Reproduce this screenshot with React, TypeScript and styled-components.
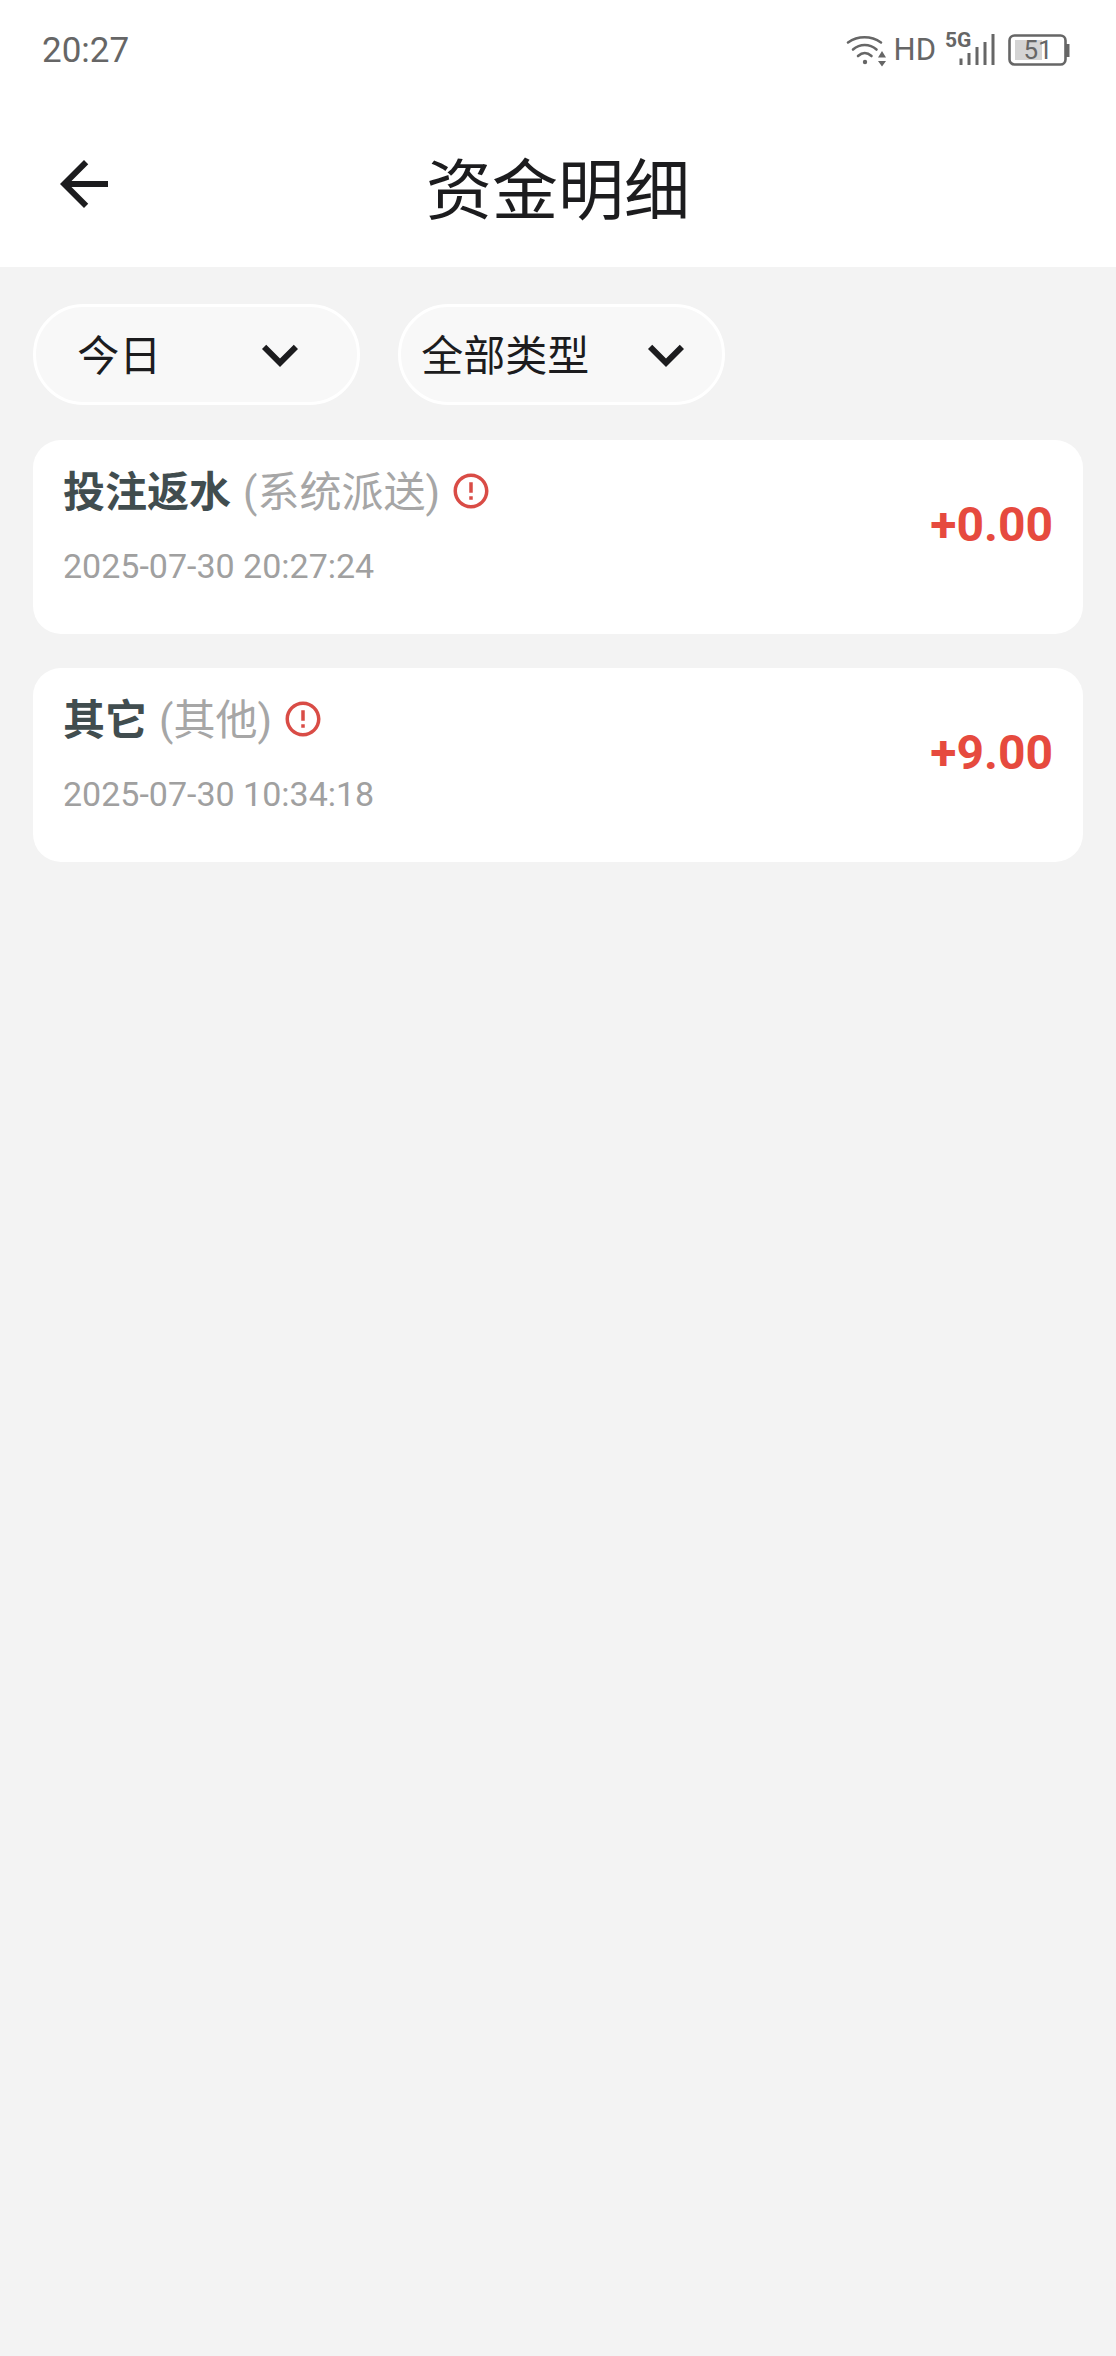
import React from 'react';
import styled, { createGlobalStyle } from 'styled-components';

const GlobalStyle = createGlobalStyle`
  *, *::before, *::after { box-sizing: border-box; }
  html, body { margin: 0; background: #f3f3f3; }
  body { font-family: Roboto, "Noto Sans CJK SC", sans-serif; color: #1c1c1e; }
  h1, h2, p, ul { margin: 0; padding: 0; font-weight: 400; }
`;

const Screen = styled.div`
  min-height: 100vh;
  background: #f3f3f3;
`;

const Top = styled.header`
  background: #ffffff;
`;

const StatusBar = styled.div`
  display: flex;
  align-items: center;
  justify-content: space-between;
  height: 100px;
  padding: 0 46px 0 42px;
  color: #666666;
`;

const Clock = styled.time`
  font-size: 35px;
  line-height: 48px;
  padding-top: 2px;
`;

const Indicators = styled.div`
  display: flex;
  align-items: center;
  height: 36px;
`;

const Hd = styled.span`
  margin: 0 8px 0 5px;
  font-size: 31px;
  line-height: 36px;
`;

const Cellular = styled.div`
  position: relative;
  width: 52px;
  height: 36px;
  margin-right: 12px;
`;

const Generation = styled.span`
  position: absolute;
  top: 0;
  left: 1px;
  font-size: 21px;
  font-weight: 700;
  line-height: 16px;
`;

const Battery = styled.div`
  position: relative;
  width: 62px;
  height: 36px;
`;

const Level = styled.span`
  position: absolute;
  inset: 0 4px 0 0;
  text-align: center;
  font-size: 26px;
  line-height: 36px;
  padding-left: 2px;
`;

const Svg = styled.svg`
  display: block;
  flex: none;
`;

const NavBar = styled.div`
  display: grid;
  grid-template-columns: 72px 1fr 72px;
  align-items: center;
  height: 167px;
  padding: 0 48px;
`;

const BackButton = styled.button`
  padding: 0;
  border: 0;
  background: none;
  color: inherit;
  cursor: pointer;
`;

const Title = styled.h1`
  padding-top: 16px;
  text-align: center;
  font-size: 66px;
  line-height: 96px;
`;

const Content = styled.main`
  padding: 37px 33px;
`;

const Filters = styled.div`
  display: flex;
  gap: 38px;
  margin-bottom: 35px;
`;

const Pill = styled.label`
  display: flex;
  align-items: center;
  justify-content: space-around;
  width: 327px;
  height: 101px;
  border: 3px solid #ffffff;
  border-radius: 51px;
  background: #f8f8f8;
  cursor: pointer;
`;

const Select = styled.select`
  appearance: none;
  field-sizing: content;
  margin: 0;
  padding: 4px 0 0;
  border: 0;
  background: none;
  color: inherit;
  font-family: inherit;
  font-size: 42px;
  line-height: 64px;
`;

const Records = styled.ul`
  display: flex;
  flex-direction: column;
  gap: 34px;
  list-style: none;
`;

const Card = styled.li`
  display: flex;
  align-items: flex-start;
  justify-content: space-between;
  height: 194px;
  padding: 17px 30px;
  border-radius: 28px;
  background: #ffffff;
`;

const Heading = styled.div`
  display: flex;
  align-items: center;
  font-size: 42px;
  line-height: 64px;
`;

const Name = styled.h2`
  padding-top: 4px;
  font-size: 42px;
  line-height: 64px;
  font-weight: 700;
  color: #414d4f;
`;

const Kind = styled.span`
  padding-top: 4px;
  margin: 0 10px 0 12px;
  color: #a6a6a6;
`;

const InfoButton = styled.button`
  padding: 0;
  border: 0;
  background: none;
  color: #d94c46;
  cursor: pointer;
`;

const Stamp = styled.time`
  display: block;
  margin-top: 17px;
  font-size: 34px;
  line-height: 48px;
  color: #a0a0a0;
`;

const Amount = styled.p`
  padding-top: 36px;
  font-size: 48px;
  font-weight: 700;
  line-height: 64px;
  color: #e64a3e;
`;

const WifiIcon = () => (
  <Svg width="44" height="36" viewBox="0 0 44 36" fill="none" stroke="currentColor" strokeWidth="2.6" strokeLinecap="round" aria-hidden="true">
    <path d="M3 10.500C13 3.500 26 3.500 36 10.500" />
    <path d="M8 17.500C15 11.500 24.500 11.500 31.500 17.500" />
    <path d="M13 24C17.500 20 22 20 26.500 24" />
    <circle cx="20" cy="30" r="2.200" fill="currentColor" stroke="none" />
    <path d="M37 19l4 6.500h-8zM37 34.500l4-5.500h-8z" fill="currentColor" stroke="none" />
  </Svg>
);

const SignalIcon = () => (
  <Svg width="52" height="36" viewBox="0 0 52 36" fill="none" stroke="currentColor" strokeWidth="3" aria-hidden="true">
    <path d="M17 26.500V33M25 21V33M33 15V33M41 10V33M49 2V33" />
  </Svg>
);

const BatteryIcon = () => (
  <Svg width="62" height="36" viewBox="0 0 62 36" fill="none" aria-hidden="true">
    <rect x="7" y="8" width="27" height="20" fill="#d4d4d4" />
    <rect x="1.500" y="3.500" width="56" height="29" rx="5" stroke="currentColor" strokeWidth="2.600" />
    <path d="M58 12h3.500v13H58z" fill="currentColor" />
  </Svg>
);

const BackIcon = () => (
  <Svg width="72" height="72" viewBox="0 0 24 24" fill="currentColor" aria-hidden="true">
    <path d="M20 11H7.830l5.590-5.590L12 4l-8 8 8 8 1.410-1.410L7.830 13H20v-2z" />
  </Svg>
);

const ChevronIcon = () => (
  <Svg width="72" height="72" viewBox="0 0 24 24" fill="currentColor" aria-hidden="true">
    <path d="M7.410 8.590L12 13.170l4.590-4.580L18 10l-6 6-6-6z" />
  </Svg>
);

const InfoIcon = () => (
  <Svg width="42" height="42" viewBox="0 0 24 24" fill="currentColor" aria-hidden="true">
    <path d="M11 15h2v2h-2zm0-8h2v6h-2zm.990-5C6.470 2 2 6.480 2 12s4.470 10 9.990 10C17.520 22 22 17.520 22 12S17.520 2 11.990 2zM12 20c-4.420 0-8-3.580-8-8s3.580-8 8-8 8 3.580 8 8-3.580 8-8 8z" />
  </Svg>
);

const filters = [
  { id: 'period', label: '今日' },
  { id: 'type', label: '全部类型' },
];

const records = [
  { name: '投注返水', kind: '(系统派送)', time: '2025-07-30 20:27:24', amount: '+0.00' },
  { name: '其它', kind: '(其他)', time: '2025-07-30 10:34:18', amount: '+9.00' },
];

export default function App() {
  return (
    <Screen>
      <GlobalStyle />
      <Top>
        <StatusBar>
          <Clock>20:27</Clock>
          <Indicators>
            <WifiIcon />
            <Hd>HD</Hd>
            <Cellular>
              <SignalIcon />
              <Generation>5G</Generation>
            </Cellular>
            <Battery>
              <BatteryIcon />
              <Level>51</Level>
            </Battery>
          </Indicators>
        </StatusBar>
        <NavBar>
          <BackButton type="button" aria-label="返回">
            <BackIcon />
          </BackButton>
          <Title>资金明细</Title>
        </NavBar>
      </Top>
      <Content>
        <Filters>
          {filters.map((f) => (
            <Pill key={f.id} htmlFor={f.id}>
              <Select id={f.id} aria-label={f.label}>
                <option>{f.label}</option>
              </Select>
              <ChevronIcon />
            </Pill>
          ))}
        </Filters>
        <Records>
          {records.map((r) => (
            <Card key={r.time}>
              <div>
                <Heading>
                  <Name>{r.name}</Name>
                  <Kind>{r.kind}</Kind>
                  <InfoButton type="button" aria-label="详情">
                    <InfoIcon />
                  </InfoButton>
                </Heading>
                <Stamp dateTime={r.time}>{r.time}</Stamp>
              </div>
              <Amount>{r.amount}</Amount>
            </Card>
          ))}
        </Records>
      </Content>
    </Screen>
  );
}
